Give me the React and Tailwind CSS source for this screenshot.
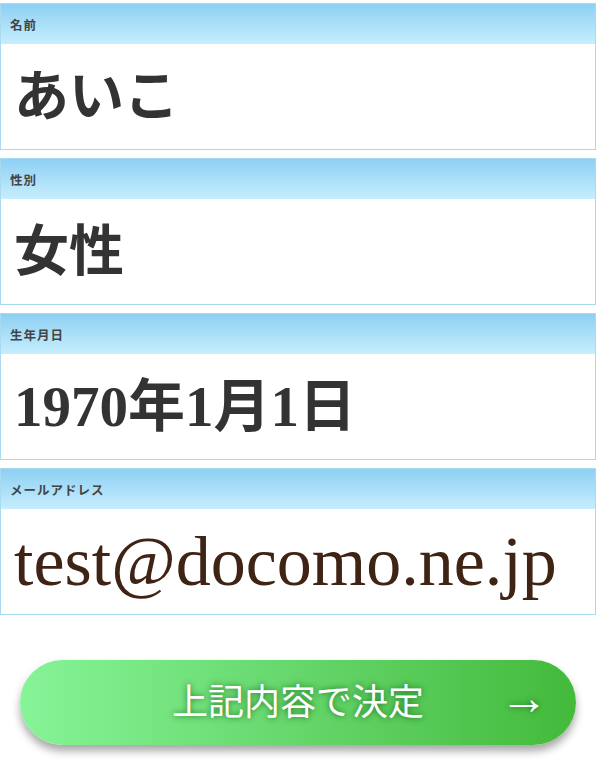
import React from 'react';

const fields = [
  { label: '名前', value: 'あいこ', size: 'text-[55px] font-semibold', color: 'text-[#333333]' },
  { label: '性別', value: '女性', size: 'text-[55px] font-semibold', color: 'text-[#333333]' },
  { label: '生年月日', value: '1970年1月1日', size: 'text-[57px] font-bold', color: 'text-[#333333]' },
  { label: 'メールアドレス', value: 'test@docomo.ne.jp', size: 'text-[70px] font-normal', color: 'text-[#3f2314]' },
];

const serif = { fontFamily: '"Liberation Serif", "Noto Sans CJK JP", serif' };

function Field({ label, value, size, color }) {
  return (
    <div className="border border-[#a9daf0] bg-white">
      <div className="h-[40px] flex items-center pt-[4px] px-[9px] bg-gradient-to-b from-[#8dd0f3] to-[#c6eefd]">
        <span className="text-[12.5px] font-bold text-[#444] tracking-[1px]" style={serif}>{label}</span>
      </div>
      <div className="h-[105px] flex items-center px-[13px]">
        <span className={`${size} ${color} leading-none`} style={serif}>{value}</span>
      </div>
    </div>
  );
}

export default function App() {
  return (
    <div className="w-[600px] h-[772px] bg-white pt-[3px] pr-[4px]">
      <div className="flex flex-col gap-[8px]">
        {fields.map((f) => (
          <Field key={f.label} {...f} />
        ))}
      </div>
      <div className="px-[20px] pt-[45px]">
        <button className="w-full h-[85px] rounded-full bg-gradient-to-r from-[#86f497] to-[#43ba3a] shadow-[0_6px_8px_rgba(0,0,0,0.35)] flex items-center relative">
          <span className="flex-1 text-center text-white text-[36px] [text-shadow:0_0_6px_rgba(0,70,0,0.7)]" style={serif}>
            上記内容で決定
          </span>
          <span className="absolute right-[28px] top-[14px] text-white text-[48px] leading-none [text-shadow:0_0_6px_rgba(0,70,0,0.7)]" style={serif}>→</span>
        </button>
      </div>
    </div>
  );
}
